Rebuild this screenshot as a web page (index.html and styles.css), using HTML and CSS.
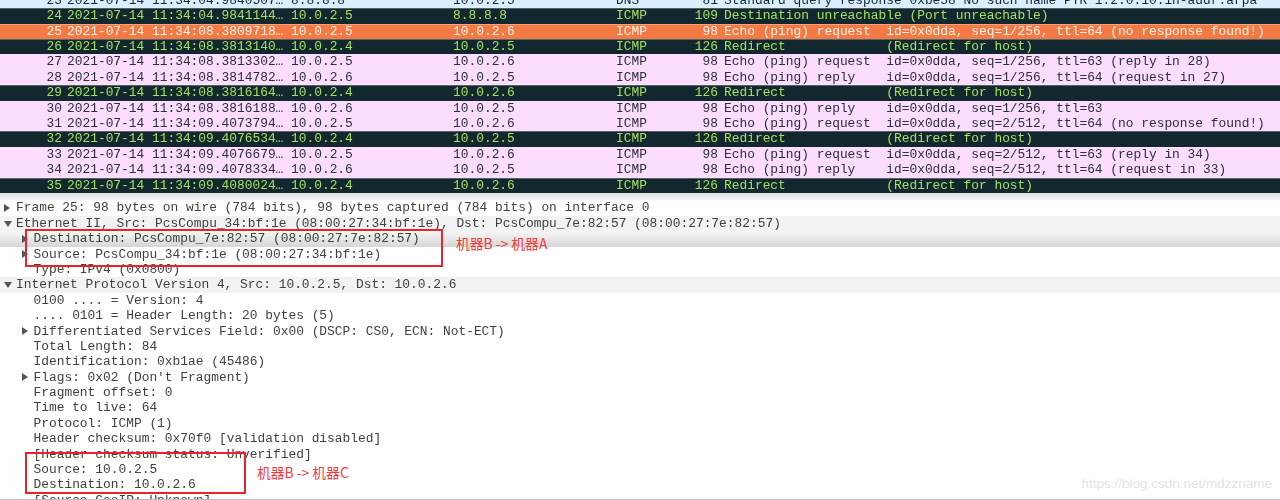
FILE: index.html
```html
<!DOCTYPE html>
<html lang="zh">
<head>
<meta charset="utf-8">
<title>Wireshark</title>
<link rel="stylesheet" href="styles.css">
</head>
<body>
<main class="app">
<section class="packets">
<div class="pkt dns"><span class="no">23</span><span>2021-07-14 11:34:04.9840507…</span><span>8.8.8.8</span><span>10.0.2.5</span><span>DNS</span><span class="len">81</span><span>Standard query response 0xbe58 No such name PTR 1.2.0.10.in-addr.arpa</span></div>
<div class="pkt dark"><span class="no">24</span><span>2021-07-14 11:34:04.9841144…</span><span>10.0.2.5</span><span>8.8.8.8</span><span>ICMP</span><span class="len">109</span><span>Destination unreachable (Port unreachable)</span></div>
<div class="pkt sel"><span class="no">25</span><span>2021-07-14 11:34:08.3809718…</span><span>10.0.2.5</span><span>10.0.2.6</span><span>ICMP</span><span class="len">98</span><span>Echo (ping) request  id=0x0dda, seq=1/256, ttl=64 (no response found!)</span></div>
<div class="pkt dark"><span class="no">26</span><span>2021-07-14 11:34:08.3813140…</span><span>10.0.2.4</span><span>10.0.2.5</span><span>ICMP</span><span class="len">126</span><span>Redirect             (Redirect for host)</span></div>
<div class="pkt ping"><span class="no">27</span><span>2021-07-14 11:34:08.3813302…</span><span>10.0.2.5</span><span>10.0.2.6</span><span>ICMP</span><span class="len">98</span><span>Echo (ping) request  id=0x0dda, seq=1/256, ttl=63 (reply in 28)</span></div>
<div class="pkt ping"><span class="no">28</span><span>2021-07-14 11:34:08.3814782…</span><span>10.0.2.6</span><span>10.0.2.5</span><span>ICMP</span><span class="len">98</span><span>Echo (ping) reply    id=0x0dda, seq=1/256, ttl=64 (request in 27)</span></div>
<div class="pkt dark"><span class="no">29</span><span>2021-07-14 11:34:08.3816164…</span><span>10.0.2.4</span><span>10.0.2.6</span><span>ICMP</span><span class="len">126</span><span>Redirect             (Redirect for host)</span></div>
<div class="pkt ping"><span class="no">30</span><span>2021-07-14 11:34:08.3816188…</span><span>10.0.2.6</span><span>10.0.2.5</span><span>ICMP</span><span class="len">98</span><span>Echo (ping) reply    id=0x0dda, seq=1/256, ttl=63</span></div>
<div class="pkt ping"><span class="no">31</span><span>2021-07-14 11:34:09.4073794…</span><span>10.0.2.5</span><span>10.0.2.6</span><span>ICMP</span><span class="len">98</span><span>Echo (ping) request  id=0x0dda, seq=2/512, ttl=64 (no response found!)</span></div>
<div class="pkt dark"><span class="no">32</span><span>2021-07-14 11:34:09.4076534…</span><span>10.0.2.4</span><span>10.0.2.5</span><span>ICMP</span><span class="len">126</span><span>Redirect             (Redirect for host)</span></div>
<div class="pkt ping"><span class="no">33</span><span>2021-07-14 11:34:09.4076679…</span><span>10.0.2.5</span><span>10.0.2.6</span><span>ICMP</span><span class="len">98</span><span>Echo (ping) request  id=0x0dda, seq=2/512, ttl=63 (reply in 34)</span></div>
<div class="pkt ping"><span class="no">34</span><span>2021-07-14 11:34:09.4078334…</span><span>10.0.2.6</span><span>10.0.2.5</span><span>ICMP</span><span class="len">98</span><span>Echo (ping) reply    id=0x0dda, seq=2/512, ttl=64 (request in 33)</span></div>
<div class="pkt dark"><span class="no">35</span><span>2021-07-14 11:34:09.4080024…</span><span>10.0.2.4</span><span>10.0.2.6</span><span>ICMP</span><span class="len">126</span><span>Redirect             (Redirect for host)</span></div>
</section>
<div class="splitter"></div>
<section class="details">
<div class="row lvl0"><i class="arrow closed"></i>Frame 25: 98 bytes on wire (784 bits), 98 bytes captured (784 bits) on interface 0</div>
<div class="row lvl0 head"><i class="arrow open"></i>Ethernet II, Src: PcsCompu_34:bf:1e (08:00:27:34:bf:1e), Dst: PcsCompu_7e:82:57 (08:00:27:7e:82:57)</div>
<div class="row lvl1 picked"><i class="arrow closed"></i>Destination: PcsCompu_7e:82:57 (08:00:27:7e:82:57)</div>
<div class="row lvl1"><i class="arrow closed"></i>Source: PcsCompu_34:bf:1e (08:00:27:34:bf:1e)</div>
<div class="row lvl1">Type: IPv4 (0x0800)</div>
<div class="row lvl0 head"><i class="arrow open"></i>Internet Protocol Version 4, Src: 10.0.2.5, Dst: 10.0.2.6</div>
<div class="row lvl1">0100 .... = Version: 4</div>
<div class="row lvl1">.... 0101 = Header Length: 20 bytes (5)</div>
<div class="row lvl1"><i class="arrow closed"></i>Differentiated Services Field: 0x00 (DSCP: CS0, ECN: Not-ECT)</div>
<div class="row lvl1">Total Length: 84</div>
<div class="row lvl1">Identification: 0xb1ae (45486)</div>
<div class="row lvl1"><i class="arrow closed"></i>Flags: 0x02 (Don't Fragment)</div>
<div class="row lvl1">Fragment offset: 0</div>
<div class="row lvl1">Time to live: 64</div>
<div class="row lvl1">Protocol: ICMP (1)</div>
<div class="row lvl1">Header checksum: 0x70f0 [validation disabled]</div>
<div class="row lvl1">[Header checksum status: Unverified]</div>
<div class="row lvl1">Source: 10.0.2.5</div>
<div class="row lvl1">Destination: 10.0.2.6</div>
<div class="row lvl1">[Source GeoIP: Unknown]</div>
</section>
<div class="box box-mac"></div>
<div class="note note-mac">机器B -&gt; 机器A</div>
<div class="box box-ip"></div>
<div class="note note-ip">机器B -&gt; 机器C</div>
<div class="mark">https://blog.csdn.net/mdzzname</div>
</main>
</body>
</html>
```
FILE: styles.css
```css
* { box-sizing: border-box; }
html, body { margin: 0; padding: 0; background: #fff; }
.app {
  position: relative;
  width: 1280px;
  height: 500px;
  overflow: hidden;
  font-family: "Liberation Mono", monospace;
  font-size: 12.88px;
  border-bottom: 1px solid #bdbdbd;
}
.packets { margin-top: -7.1px; filter: blur(0.3px); }
.pkt {
  display: grid;
  grid-template-columns: 62px 224px 167px 163px 76px 26px 1fr;
  height: 15.4px;
  line-height: 15.4px;
  white-space: pre;
  overflow: hidden;
}
.pkt span:nth-child(2) { padding-left: 5px; }
.pkt span:nth-child(3) { padding-left: 5px; }
.pkt span:last-child { padding-left: 6px; }
.no, .len { text-align: right; }
.dns { background: #daeeff; color: #12272e; }
.dark { background: #12272e; color: #a2e060; box-shadow: inset 0 1px 0 #55646a; }
.ping { background: #fcdcff; color: #2a3238; }
.sel { background: #f47a45; color: #fff2e8; box-shadow: inset 0 1px 0 #f9a27c; }
.splitter { height: 7.4px; background: linear-gradient(#e0e0e0, #f4f4f4); }
.details { color: #404040; filter: blur(0.3px); }
.row {
  position: relative;
  height: 15.4px;
  line-height: 15.4px;
  white-space: pre;
}
.lvl0 { padding-left: 16px; }
.lvl1 { padding-left: 33.5px; }
.head { background: #f2f2f2; }
.picked { background: linear-gradient(#f6f6f6, #d6d6d6); }
.arrow {
  position: absolute;
  width: 0;
  height: 0;
  border-style: solid;
  border-color: transparent;
}
.closed { top: 3.5px; border-width: 4px 0 4px 6px; border-left-color: #555; }
.open { top: 5px; border-width: 6px 4px 0 4px; border-top-color: #555; }
.lvl0 .arrow { left: 3.5px; }
.lvl1 .arrow { left: 21.5px; }
.box { position: absolute; border: 2px solid #e8232e; }
.box-mac { left: 25px; top: 229px; width: 418px; height: 38px; }
.box-ip { left: 25px; top: 452px; width: 221px; height: 42px; }
.note {
  position: absolute;
  color: #ee3b3b;
  font-family: "Noto Sans CJK SC", "Liberation Sans", sans-serif;
  font-size: 13.8px;
  line-height: 16px;
}
.note-mac { left: 456px; top: 235px; }
.note-ip { left: 257px; top: 464px; }
.mark {
  position: absolute;
  right: 8px;
  top: 476px;
  color: #e4e4e4;
  font-family: "Liberation Sans", sans-serif;
  font-size: 13.5px;
}
```
